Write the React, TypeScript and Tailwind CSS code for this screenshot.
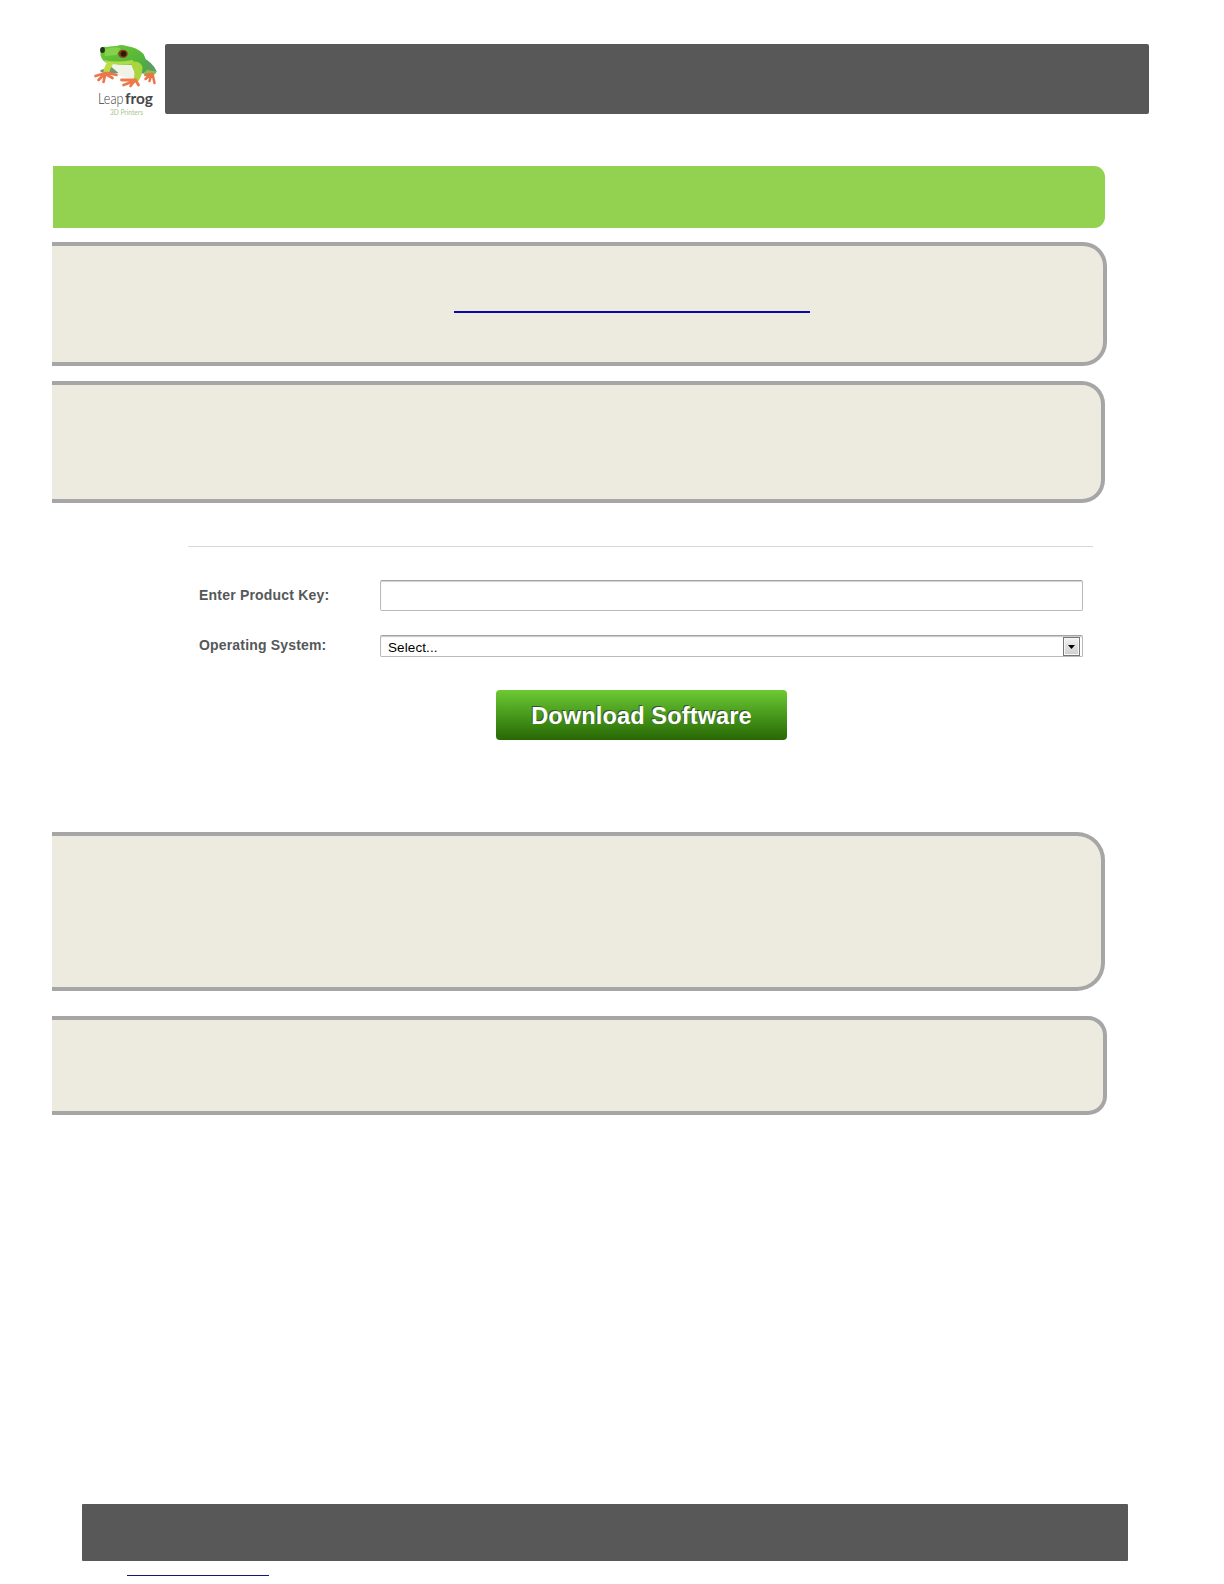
import React, { useState } from 'react'

const FrogLogo = () => {
  return (
    <svg width='64' height='74' viewBox='0 0 64 74' role='img' aria-label='Leapfrog 3D Printers' className='overflow-visible'>
      <defs>
        <linearGradient id='frogBack' x1='0' y1='0' x2='1' y2='1'>
          <stop offset='0' stopColor='#6cc83a' />
          <stop offset='0.5' stopColor='#5cbb35' />
          <stop offset='1' stopColor='#46a548' />
        </linearGradient>
      </defs>
      <g transform='translate(0.5 1)'>
        {/* Hind leg */}
        <path d='M47 12 Q58 17 62 26 Q62 30 55 30 L46 28 Z' fill='#5b9f5e' />
        <path d='M49 23 Q56 27 62 26 L59 31 L50 31 Z' fill='#8fbd55' />
        {/* Belly */}
        <path d='M14 17 Q28 18 38 19 L44 26 L42 34 Q28 33 16 27 Z' fill='#f1f3e8' />
        <path d='M6 25 L17 22 L24 28 Q15 30 6 27 Z' fill='#6f9a72' />
        {/* Body and head */}
        <path d='M6 6 Q7 1 12 2 Q18 1 22 1 Q27 -1 32 1 Q42 2 49 9 Q53 16 52 26 L45 29 L39 20 Q25 20 12 18 Q5 14 6 6 Z' fill='url(#frogBack)' />
        <path d='M11 4 Q20 1 26 3 L22 10 L10 11 Z' fill='#84d24a' />
        <path d='M9 15 Q22 18 38 15 L40 19 Q24 21 12 18 Z' fill='#b0da4c' />
        {/* Front legs */}
        <path d='M13 17 L19 18 Q16 23 14 29 L9 29 Q9 22 13 17 Z' fill='#bfdc45' />
        <path d='M36 17 Q45 15 48 22 Q48 30 44 36 L38 36 Q42 29 38 23 Z' fill='#a9d63f' />
        {/* Feet */}
        <path d='M11 28 L1 31 M10 29 L4 35 M11 28 L9 37 M11 29 L18 33 M13 28 L22 30' fill='none' stroke='#ee764a' strokeWidth='2.7' strokeLinecap='round' />
        <path d='M40 35 L27 35 M40 36 L29 40 M40 36 L36 41 M41 35 L44 40' fill='none' stroke='#ef7849' strokeWidth='2.8' strokeLinecap='round' />
        <path d='M57 29 L51 30 M57 29 L55 36 M58 29 L60 38 M57 29 L51 34' fill='none' stroke='#ec7345' strokeWidth='2.5' strokeLinecap='round' />
        {/* Eyes */}
        <ellipse cx='8' cy='5' rx='2.4' ry='3' fill='#26341a' />
        <ellipse cx='28.5' cy='8.8' rx='4.8' ry='4' fill='#8a3c1d' />
        <ellipse cx='29' cy='8.8' rx='2.8' ry='2.8' fill='#2c1a10' />
      </g>
      <text x='4' y='59.5' textLength='25.5' lengthAdjust='spacingAndGlyphs' fontFamily='Lato, sans-serif' fontWeight='300' fontSize='16' fill='#3c3c3c'>Leap</text>
      <text x='31' y='59.5' textLength='28' lengthAdjust='spacingAndGlyphs' fontFamily='Lato, sans-serif' fontWeight='700' fontSize='16' fill='#484848'>frog</text>
      <text x='16' y='70.5' textLength='33' lengthAdjust='spacingAndGlyphs' fontFamily='Lato, sans-serif' fontSize='7' fill='#adc58a'>3D Printers</text>
    </svg>
  )
}

interface PanelProps {
  className: string
  children?: React.ReactNode
}

const Panel = ({ className, children }: PanelProps) => (
  <section className={`border-4 border-l-0 border-[#a6a6a6] bg-[#edebe0] ${className}`}>
    {children}
  </section>
)

const App = () => {
  const [productKey, setProductKey] = useState('')

  return (
    <div className="flex h-[1584px] w-[1224px] flex-col overflow-hidden bg-white font-['Liberation_Sans',Arial,sans-serif]">
      {/* Header */}
      <header className='flex shrink-0 items-start pt-11 pl-[94px]'>
        <div className='h-[74px] w-[71px]'>
          <FrogLogo />
        </div>
        <div className='h-[70px] w-[984px] rounded-[2px] bg-[#585858]' />
      </header>

      <main className='flex shrink-0 flex-col pl-[52px]'>
        <div className='mt-12 ml-px h-[62px] w-[1052px] rounded-r-[11px] bg-[#92d250]' />

        <Panel className='mt-[14px] h-[124px] w-[1055px] rounded-r-[24px]'>
          <a href='#' aria-label='Software download' className='mt-[65px] ml-[402px] block h-[2px] w-[356px] bg-[#0808b0]' />
        </Panel>
        <Panel className='mt-[15px] h-[122px] w-[1053px] rounded-r-[23px]' />

        {/* Download form */}
        <form className='mt-[43px] ml-[136px] h-[286px] w-[905px] border-t border-[#d9d9d9]' onSubmit={(e) => e.preventDefault()}>
          <div className='mt-[33px] flex h-[31px] items-center pl-[11px]'>
            <label htmlFor='key' className='w-[181px] text-[14px] font-bold tracking-[0.2px] text-[#55585a]'>Enter Product Key:</label>
            <input
              id='key'
              value={productKey}
              onChange={(e) => setProductKey(e.target.value)}
              className='h-[31px] w-[703px] rounded-[2px] border border-[#b9b9b9] border-t-[#a2a2a2] bg-white px-2 shadow-[inset_0_1px_1px_#d2d2d2] outline-none'
            />
          </div>
          <div className='mt-6 flex h-[22px] items-center pl-[11px]'>
            <label className='w-[181px] pb-[2px] text-[14px] font-bold tracking-[0.17px] text-[#55585a]'>Operating System:</label>
            <button
              type='button'
              className='flex h-[22px] w-[703px] items-center justify-between rounded-[2px] border border-[#b9b9b9] border-t-[#a2a2a2] bg-white pr-[2px] pl-[7px] text-[13.5px] text-black shadow-[inset_0_1px_1px_#c8c8c8]'
            >
              <span className='pt-1 tracking-[0.1px]'>Select...</span>
              <span className='mt-px flex h-[19px] w-[17px] items-center justify-center border border-[#777777] bg-linear-to-b from-[#f2f2f2] to-[#cfcfcf] shadow-[inset_0_0_0_1px_#f7f7f7]'>
                <svg width='7' height='4' viewBox='0 0 7 4'>
                  <path d='M0 0H7L3.5 4Z' fill='#000000' />
                </svg>
              </span>
            </button>
          </div>
          <button
            type='submit'
            className='mt-[33px] ml-[308px] block h-[50px] w-[291px] rounded-[4px] bg-linear-to-b from-[#6dca33] via-[#48991c] to-[#286804] pt-[3px] text-[23.5px] font-bold tracking-[0.15px] text-white [text-shadow:-1px_-1px_0_#355426]'
          >
            Download Software
          </button>
        </form>

        <Panel className='h-[159px] w-[1053px] rounded-r-[28px]' />
        <Panel className='mt-[25px] h-[99px] w-[1055px] rounded-r-[19px]' />
      </main>

      {/* Footer */}
      <footer className='mt-auto shrink-0 pb-2 pl-[82px]'>
        <div className='h-[57px] w-[1046px] rounded-[1px] bg-[#585858]' />
        <a href='#' aria-label='Website' className='mt-[14px] ml-[45px] block h-px w-[142px] bg-[#14147f]' />
      </footer>
    </div>
  )
}

export default App
